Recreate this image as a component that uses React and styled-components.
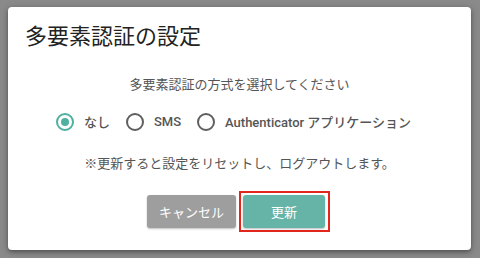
import React, { useState } from 'react';
import styled, { createGlobalStyle } from 'styled-components';

const GlobalStyle = createGlobalStyle`
body {
  margin: 0;
  background: #8a8a8a;
  font-family: Roboto, "Noto Sans CJK JP", sans-serif;
}
`

const Overlay = styled.div`
width: 480px;
height: 258px;
padding-top: 7px;
box-sizing: border-box;
overflow: hidden;
`

const Dialog = styled.div`
margin-left: 8px;
width: 463px;
height: 243px;
box-sizing: border-box;
background: #fff;
border-radius: 4px;
box-shadow: 0 2px 4px rgba(0, 0, 0, 0.35), 0 1px 10px rgba(0, 0, 0, 0.15);
padding: 11px 17px 20px;
display: flex;
flex-direction: column;
`

const Title = styled.h2`
margin: 0;
font-size: 22px;
line-height: 32px;
font-weight: 400;
color: #222;
font-family: "Noto Sans CJK JP", sans-serif;
`

const Lead = styled.p`
margin: 24px 0 0;
text-align: center;
font-size: 13px;
line-height: 20px;
color: #555;
font-family: "Noto Sans CJK JP", sans-serif;
`

const Options = styled.div`
margin-top: 18px;
height: 24px;
display: flex;
justify-content: center;
align-items: center;
padding-right: 12px;
`

const Option = styled.label`
display: flex;
align-items: center;
margin-right: 16px;
cursor: pointer;
font-size: 13px;
font-weight: 500;
color: #555;
&:last-child {
  margin-right: 0;
}
`

const Circle = styled.span`
width: 18px;
height: 18px;
box-sizing: border-box;
border-radius: 50%;
border: 2px solid ${p => (p.$on ? '#4fb0a1' : '#5f5f5f')};
display: flex;
align-items: center;
justify-content: center;
margin-right: 10px;
&::after {
  content: '';
  width: 8px;
  height: 8px;
  border-radius: 50%;
  background: #4fb0a1;
  display: ${p => (p.$on ? 'block' : 'none')};
}
`

const Note = styled.p`
margin: 22px 0 0;
text-align: center;
font-size: 13px;
line-height: 20px;
color: #555;
font-family: "Noto Sans CJK JP", sans-serif;
`

const Actions = styled.div`
margin-top: 18px;
display: flex;
justify-content: center;
align-items: center;
gap: 3px;
padding-right: 2px;
`

const FocusRing = styled.span`
display: flex;
padding: 2px 3px 2px 2px;
border: 2px solid #e3261b;
`

const Button = styled.button`
height: 33px;
width: ${p => p.$w}px;
border: none;
border-radius: 3px;
background: ${p => p.$bg};
color: #fff;
font-size: 13px;
font-family: "Noto Sans CJK JP", sans-serif;
box-shadow: 0 1px 2px rgba(0, 0, 0, 0.25);
cursor: pointer;
`

const methods = [
  { id: 'none', label: 'なし' },
  { id: 'sms', label: 'SMS' },
  { id: 'app', label: 'Authenticator アプリケーション' },
]

export default function App() {
  const [method, setMethod] = useState('none');

  return (
    <Overlay>
      <GlobalStyle />
      <Dialog>
        <Title>多要素認証の設定</Title>
        <Lead>多要素認証の方式を選択してください</Lead>
        <Options>
          {methods.map(m => (
            <Option key={m.id} onClick={() => setMethod(m.id)}>
              <Circle $on={method === m.id} />
              {m.label}
            </Option>
          ))}
        </Options>
        <Note>※更新すると設定をリセットし、ログアウトします。</Note>
        <Actions>
          <Button $w={89} $bg="#9e9e9e">キャンセル</Button>
          <FocusRing>
            <Button $w={82} $bg="#66b4a7">更新</Button>
          </FocusRing>
        </Actions>
      </Dialog>
    </Overlay>
  )
}
